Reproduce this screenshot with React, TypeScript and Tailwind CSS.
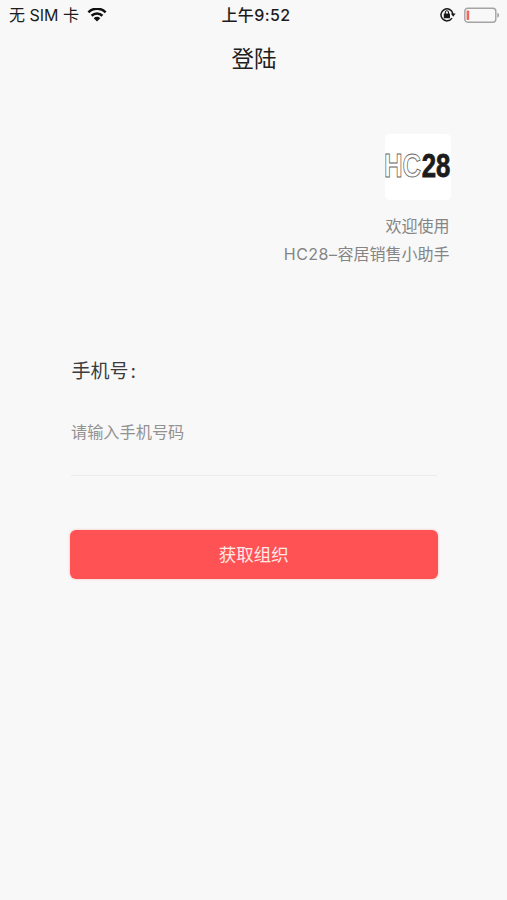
import { useState } from 'react'

function WifiIcon() {
  return (
    <svg className="h-[15px] w-5" viewBox="0 0 20 15" fill="none" stroke="#111" strokeWidth="2.6">
      <path d="M1.4 4.3a12.2 12.2 0 0 1 17.2 0" />
      <path d="M4.6 7.7a7.7 7.7 0 0 1 10.8 0" />
      <path d="M10 13.5 6.7 10.2a4.7 4.7 0 0 1 6.6 0Z" fill="#111" stroke="none" />
    </svg>
  )
}

function RotationLockIcon() {
  return (
    <svg className="h-4 w-4" viewBox="0 0 16 16" fill="none" stroke="#1a1a1a">
      <path d="M12 11.2a6 6 0 1 1 .9-4.4" strokeWidth="1.5" />
      <path d="M10.8 6.6h4.8l-2.4 3.2Z" fill="#1a1a1a" stroke="none" />
      <rect x="3.8" y="6.6" width="6.2" height="4.6" rx="0.5" fill="#1a1a1a" stroke="none" />
      <path d="M5.3 7V5.4a1.6 1.6 0 0 1 3.2 0V7" strokeWidth="1.1" />
    </svg>
  )
}

function BatteryIcon() {
  return (
    <svg className="h-[17px] w-9" viewBox="0 0 36 17" fill="none">
      <rect x="0.8" y="1.2" width="31" height="14" rx="3" stroke="#a3a3a3" strokeWidth="1.4" />
      <rect x="2.6" y="3.4" width="2.6" height="9.6" rx="0.8" fill="#f4675f" />
      <path d="M33.3 5.8c2.4.8 2.4 4.2 0 5Z" fill="#a3a3a3" />
    </svg>
  )
}

function StatusBar() {
  return (
    <header className="grid h-[30px] grid-cols-3 items-center pr-[7px] pl-[9px] text-[16px] text-[#1c1c1c]">
      <div className="flex items-center gap-2">
        <span className="whitespace-nowrap">无 SIM 卡</span>
        <WifiIcon />
      </div>
      <span className="pl-[3px] text-center font-medium tracking-[0.4px]">上午9:52</span>
      <div className="flex items-center justify-end gap-2">
        <RotationLockIcon />
        <BatteryIcon />
      </div>
    </header>
  )
}

function Logo() {
  return (
    <svg className="h-[66px] w-[66px] rounded-[5px] bg-white" viewBox="0 0 66 66">
      <g fontFamily="Liberation Sans, Arial, sans-serif" fontSize="33" fontWeight="700">
        <text transform="translate(-1 43) scale(0.78 1)" fill="#fff" stroke="#666" strokeWidth="0.9">
          HC
        </text>
        <text transform="translate(36.7 43) scale(0.78 1)" fill="#1c1c1c" stroke="#1c1c1c" strokeWidth="0.8">
          28
        </text>
      </g>
    </svg>
  )
}

export default function App() {
  const [phone, setPhone] = useState('')

  return (
    <div className="min-h-screen bg-[#f8f8f8] font-[Inter,'Noto_Sans_CJK_SC',sans-serif]">
      <StatusBar />
      <h1 className="flex h-14 items-center justify-center pt-0.5 pl-px text-[22.5px] text-[#202020]">登陆</h1>

      <section className="mt-12 flex flex-col items-end pr-[56.5px] text-[16px] leading-7 text-[#858585]">
        <Logo />
        <p className="mt-3 pr-px">欢迎使用</p>
        <p className="pr-px">
          <span className="tracking-[0.5px]">HC28–</span>容居销售小助手
        </p>
      </section>

      <form className="mt-[88px] pr-[69.5px] pl-[70px]" onSubmit={(e) => e.preventDefault()}>
        <label htmlFor="phone" className="block pl-[1.5px] text-[19px] leading-8 text-[#3c3c3c]">
          手机号<span className="pl-0.5">:</span>
        </label>
        <input
          id="phone"
          type="tel"
          value={phone}
          onChange={(e) => setPhone(e.target.value)}
          placeholder="请输入手机号码"
          className="mt-[3px] mx-px block h-[85px] w-[calc(100%-2px)] border-b border-[#ebebeb] bg-transparent pb-0.5 text-[16.2px] outline-none placeholder:text-[#929292]"
        />
        <button
          type="submit"
          className="mt-[54px] h-[49px] w-full rounded-[6px] bg-[#ff5254] pt-px text-[17.5px] text-[#ffe9e7] shadow-[0_0_3px_rgba(255,82,84,0.35)]"
        >
          获取组织
        </button>
      </form>
    </div>
  )
}
